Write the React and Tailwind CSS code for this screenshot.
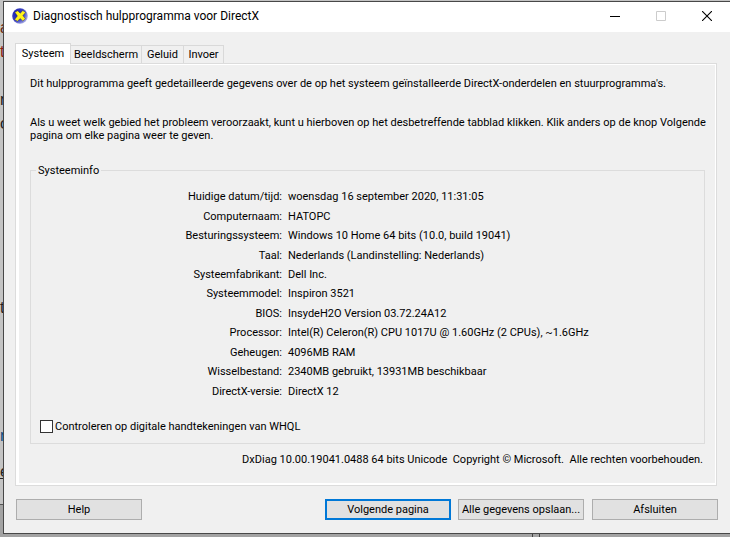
import React from "react";

const tabs = ["Systeem", "Beeldscherm", "Geluid", "Invoer"];

const info = [
  ["Huidige datum/tijd:", "woensdag 16 september 2020, 11:31:05"],
  ["Computernaam:", "HATOPC"],
  ["Besturingssysteem:", "Windows 10 Home 64 bits (10.0, build 19041)"],
  ["Taal:", "Nederlands (Landinstelling: Nederlands)"],
  ["Systeemfabrikant:", "Dell Inc."],
  ["Systeemmodel:", "Inspiron 3521"],
  ["BIOS:", "InsydeH2O Version 03.72.24A12"],
  ["Processor:", "Intel(R) Celeron(R) CPU 1017U @ 1.60GHz (2 CPUs), ~1.6GHz"],
  ["Geheugen:", "4096MB RAM"],
  ["Wisselbestand:", "2340MB gebruikt, 13931MB beschikbaar"],
  ["DirectX-versie:", "DirectX 12"],
];

function DxIcon() {
  return (
    <svg className="h-4 w-4 shrink-0" viewBox="0 0 16 16" aria-hidden="true">
      <defs>
        <radialGradient id="ball" cx="0.3" cy="0.35" r="0.8">
          <stop offset="0" stopColor="#1c22b0" />
          <stop offset="0.55" stopColor="#3a40c0" />
          <stop offset="1" stopColor="#c4c8f0" />
        </radialGradient>
      </defs>
      <circle cx="8" cy="8" r="7.8" fill="url(#ball)" />
      <path d="M2.8 4.2 5.8 2.8 8.2 5.2 10.8 2.6 13.6 4.4 10.9 7.6 13.4 10.8 10.8 13 8.2 10.6 5.4 13.2 2.6 11.4 5.4 8Z" fill="#fff41a" stroke="#15155c" strokeWidth="0.4" />
    </svg>
  );
}

function CaptionButton({ label, children }) {
  return (
    <button aria-label={label} className="flex h-7 w-[46px] items-center justify-center">
      {children}
    </button>
  );
}

function PushButton({ children, primary }) {
  return (
    <button
      className={`h-[21px] w-[126px] whitespace-nowrap bg-[#e1e1e1] ${
        primary ? "border-2 border-[#0078d7]" : "border border-[#adadad]"
      }`}
    >
      {children}
    </button>
  );
}

function Backdrop() {
  return (
    <div aria-hidden="true" className="absolute inset-0 overflow-hidden bg-[#c4c4c4] font-['Liberation_Sans',sans-serif] text-base text-[#222]">
      <span className="absolute left-0 top-4 text-[#6b2a10]">a</span>
      <span className="absolute left-0 top-10 text-[#8b2010]">t</span>
      <span className="absolute left-0 top-[88px]">n</span>
      <span className="absolute left-0 top-28">o</span>
      <span className="absolute left-0 top-[296px]">t</span>
      <span className="absolute left-0 top-[424px] text-[#104a80]">n</span>
      <span className="absolute left-0 top-[460px] underline">e</span>
      <div className="absolute inset-x-0 top-[504px] bottom-0 border-t border-[#555] bg-[#a3a3a3]" />
      <div className="absolute bottom-0 left-[532px] h-8 w-2 border-x border-[#444]" />
    </div>
  );
}

export default function App() {
  return (
    <div className="relative flex min-h-screen flex-col pt-px pb-[3px] pl-[3px] font-[Roboto,sans-serif] text-[11px] leading-[13px] text-black">
      <Backdrop />
      <main className="relative flex grow flex-col border-y border-l border-[#484848] bg-[#f0f0f0]">
        <header className="flex h-[30px] items-start bg-white pl-2 text-xs">
          <div className="flex h-7 grow items-center gap-[5px]">
            <DxIcon />
            <h1>Diagnostisch hulpprogramma voor DirectX</h1>
          </div>
          <CaptionButton label="Minimaliseren">
            <svg width="10" height="10" viewBox="0 0 10 10"><path d="M0 5.5h10" stroke="#000" /></svg>
          </CaptionButton>
          <CaptionButton label="Maximaliseren">
            <svg width="10" height="10" viewBox="0 0 10 10"><path d="M.5.5h9v9h-9z" fill="none" stroke="#ccc" /></svg>
          </CaptionButton>
          <CaptionButton label="Sluiten">
            <svg width="10" height="10" viewBox="0 0 10 10"><path d="M0 0l10 10M10 0L0 10" stroke="#000" strokeWidth="1.1" /></svg>
          </CaptionButton>
        </header>

        <div className="flex grow flex-col pt-[11px] pr-[13px] pl-[11px]">
          <div role="tablist" className="flex items-end">
            {tabs.map((tab, i) => (
              <button
                key={tab}
                role="tab"
                aria-selected={i === 0}
                className={
                  i === 0
                    ? "relative z-10 -mb-px h-[21px] w-14 border border-b-0 border-[#d9d9d9] bg-white pb-0.5"
                    : i === 1
                    ? "h-[18px] w-[71px] border border-b-0 border-l-0 border-[#d9d9d9]"
                    : i === 2
                    ? "h-[18px] w-[42px] border border-b-0 border-l-0 border-[#d9d9d9]"
                    : "h-[18px] w-10 border border-b-0 border-l-0 border-[#d9d9d9]"
                }
              >
                {tab}
              </button>
            ))}
          </div>

          <section role="tabpanel" className="border border-[#dcdcdc] bg-white pt-px pr-px pb-0.5 pl-[3px]">
            <div className="bg-[#f0f0f0] pt-3 pb-[17px] pl-[11px]">
              <p>
                Dit hulpprogramma geeft gedetailleerde gegevens over de op het systeem geïnstalleerde DirectX-onderdelen en stuurprogramma's.
              </p>
              <p className="mt-[26px]">
                Als u weet welk gebied het probleem veroorzaakt, kunt u hierboven op het desbetreffende tabblad klikken. Klik anders op de knop Volgende pagina om elke pagina weer te geven.
              </p>

              <fieldset className="mt-[22px] mr-[10px] border border-[#dcdcdc] px-[9px] pb-[10px]">
                <legend className="-ml-1 px-0.5">Systeeminfo</legend>
                <dl className="mt-[10px] grid h-[214px] auto-rows-fr grid-cols-[242px_1fr] items-center gap-x-1.5">
                  {info.map(([name, value]) => (
                    <React.Fragment key={name}>
                      <dt className="text-right">{name}</dt>
                      <dd>{value}</dd>
                    </React.Fragment>
                  ))}
                </dl>
                <label className="mt-[19px] flex items-center gap-0.5">
                  <input type="checkbox" className="h-[13px] w-[13px] appearance-none border border-[#333] bg-white" />
                  Controleren op digitale handtekeningen van WHQL
                </label>
              </fieldset>

              <p className="mt-[9px] pr-3 whitespace-pre text-right">
                {"DxDiag 10.00.19041.0488 64 bits Unicode  Copyright © Microsoft.  Alle rechten voorbehouden."}
              </p>
            </div>
          </section>
        </div>

        <footer className="flex gap-2 pt-[13px] pr-3 pb-[13px] pl-3">
          <PushButton>Help</PushButton>
          <div className="ml-auto flex gap-[7px]">
            <PushButton primary>Volgende pagina</PushButton>
            <PushButton>Alle gegevens opslaan...</PushButton>
          </div>
          <PushButton>Afsluiten</PushButton>
        </footer>
      </main>
    </div>
  );
}
